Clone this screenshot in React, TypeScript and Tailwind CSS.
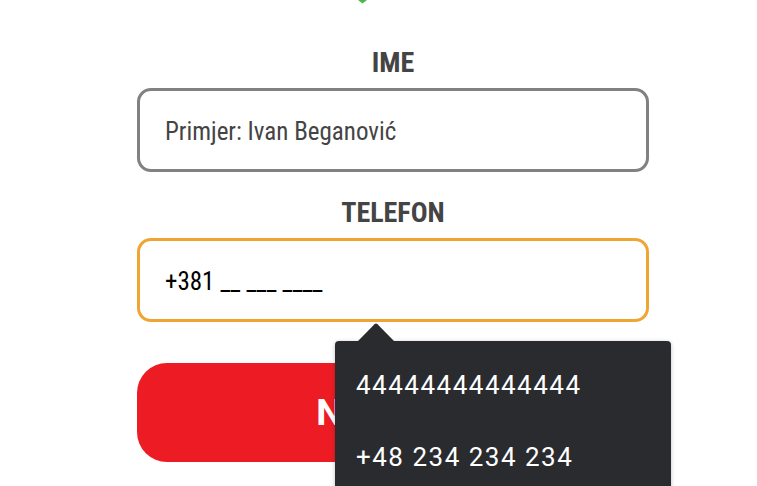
import * as React from "react";

const condensed =
  "font-['Roboto_Condensed','Liberation_Sans_Narrow','Roboto',sans-serif] [font-stretch:condensed]";

function Field({
  label,
  value,
  focused,
  placeholder,
}: {
  label: string;
  value: string;
  focused?: boolean;
  placeholder?: boolean;
}) {
  return (
    <div className="flex flex-col">
      <div
        className={`${condensed} text-center text-[28px] font-bold leading-[32px] text-[#444444]`}
      >
        {label}
      </div>
      <div
        className={
          "mt-[9px] flex h-[84px] items-center rounded-[14px] border-[3px] bg-white px-[25px] pt-[4px] " +
          (focused ? "border-[#f0a533]" : "border-[#818181]")
        }
      >
        <span
          className={`${condensed} text-[25px] leading-[32px] ${
            placeholder ? "text-[#444444]" : "text-black"
          }`}
        >
          {value}
        </span>
      </div>
    </div>
  );
}

export default function App() {
  const suggestions = ["44444444444444", "+48 234 234 234"];

  return (
    <div className="relative h-[486px] w-[757px] overflow-hidden bg-white">
      {/* tip of the check icon scrolled above */}
      <svg
        className="ml-[358px] block"
        width="9"
        height="4"
        viewBox="0 0 9 4"
        aria-hidden
      >
        <path d="M0 0 L4.5 3.5 L9 0 Z" fill="#4cb848" />
      </svg>

      <div className="ml-[137px] mt-[43px] flex w-[512px] flex-col">
        <Field label="IME" value="Primjer: Ivan Beganović" placeholder />
        <div className="mt-[25px]">
          <Field label="TELEFON" value="+381 __ ___ ____" focused />
        </div>
        <button
          type="button"
          className="mt-[41px] flex h-[99px] items-center justify-center rounded-[30px] bg-[#ed1c24] font-['Roboto',sans-serif] text-[37px] font-bold text-white"
        >
          NASTAVI
        </button>
      </div>

      {/* autofill dropdown */}
      <div className="absolute left-[335px] top-[323px] w-[336px]">
        <svg
          className="ml-[23px] block"
          width="36"
          height="18"
          viewBox="0 0 36 18"
          aria-hidden
        >
          <path d="M0 18 L16.5 1.2 Q18 0 19.5 1.2 L36 18 Z" fill="#2a2b2f" />
        </svg>
        <div className="h-[170px] rounded-[4px] bg-[#2a2b2f] py-[8px] shadow-[0_1px_4px_rgba(0,0,0,0.25)]">
          {suggestions.map((s) => (
            <div
              key={s}
              className="flex h-[72px] items-center px-[21px] font-['Roboto',sans-serif] text-[26px] tracking-[1.5px] text-white"
            >
              {s}
            </div>
          ))}
        </div>
      </div>
    </div>
  );
}
